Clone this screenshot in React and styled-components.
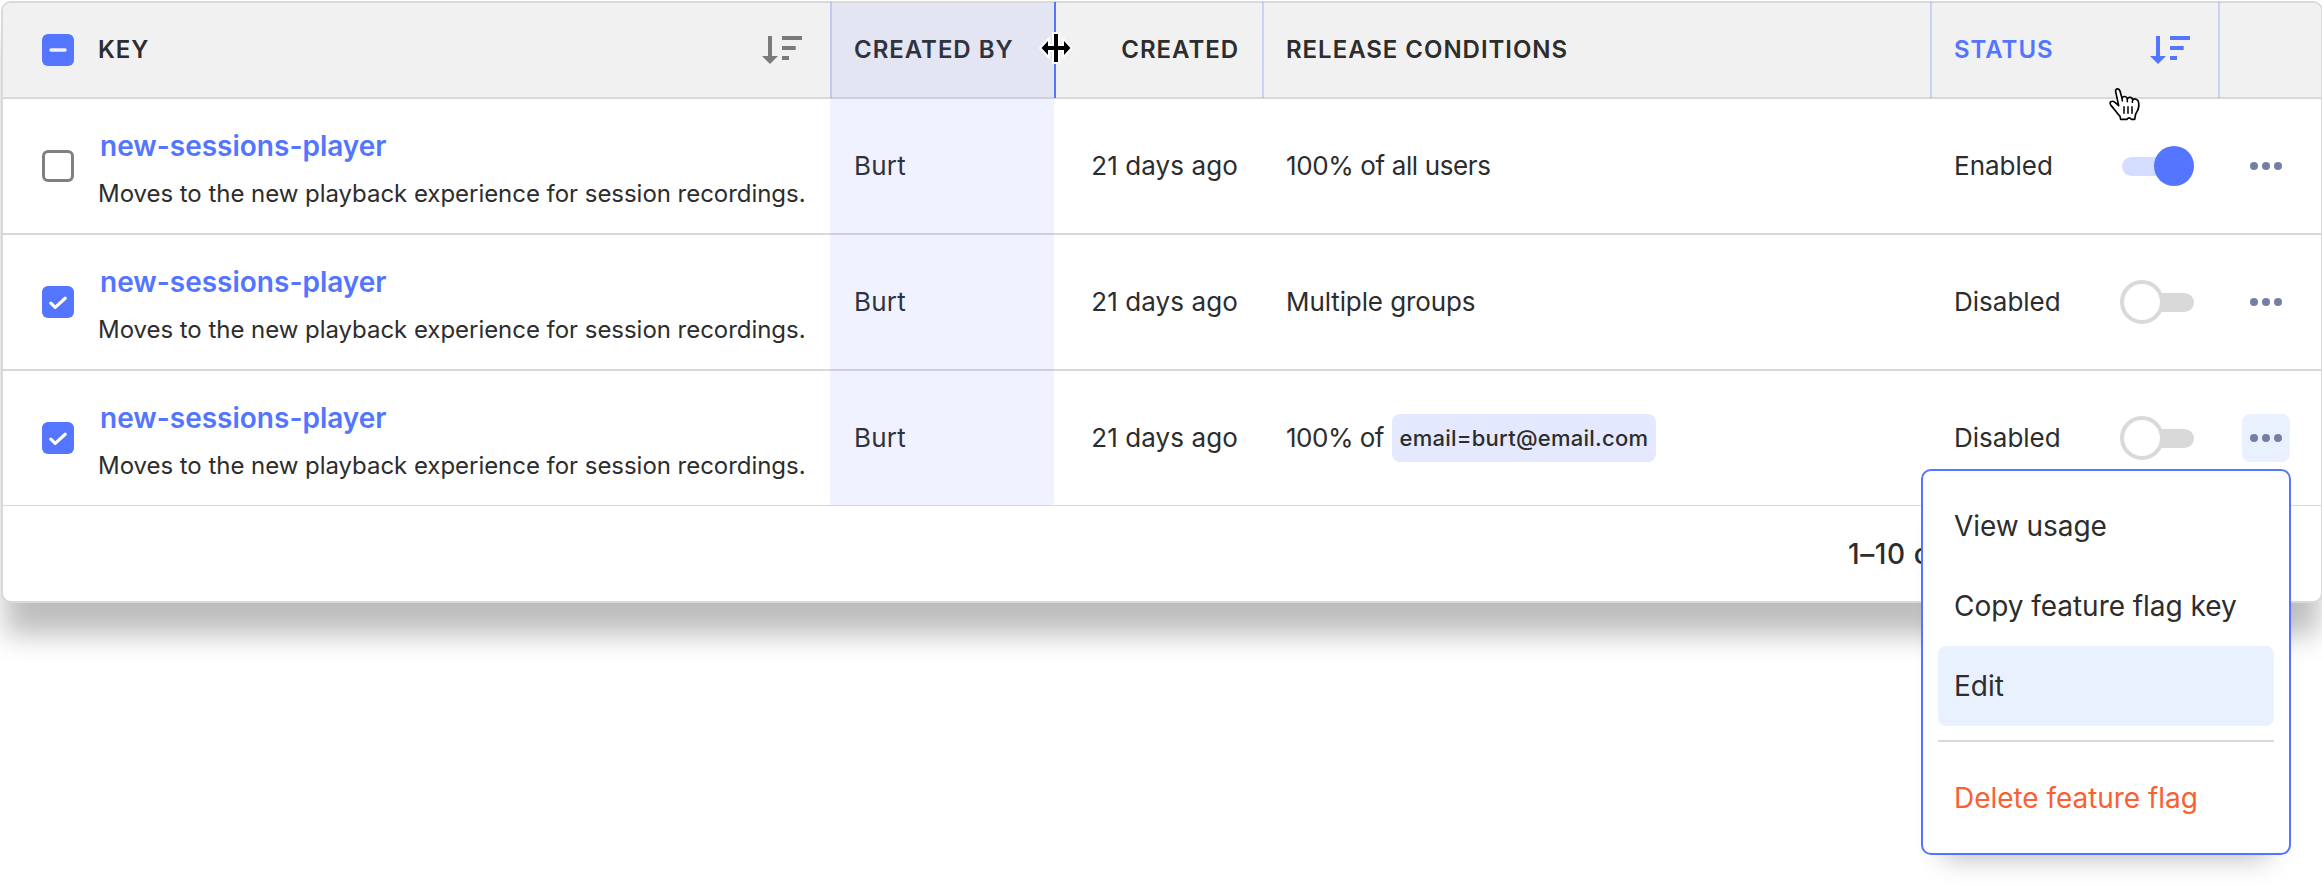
import React from "react";
import styled, { createGlobalStyle, css } from "styled-components";

const blue = "#5375ff";
const line = "#d9d9d9";
const ink = "#2d2d2d";

const GlobalStyle = createGlobalStyle`
  *, *::before, *::after { box-sizing: border-box; }
  body {
    margin: 0;
    background: #fff;
    overflow: hidden;
  }
`;

const Page = styled.main`
  width: 2322px;
  height: 886px;
  padding: 1px 0 0 1px;
  overflow: hidden;
  font-family: Inter, "Liberation Sans", sans-serif;
  color: ${ink};
`;

const Card = styled.section`
  position: relative;
  width: 2322px;
  height: 602px;
  border: 2px solid ${line};
  border-radius: 10px;
  background: #fff;
  box-shadow: 0 36px 28px -4px rgba(0, 0, 0, 0.26);
`;

const gridColumns = css`
  display: grid;
  grid-template-columns: 827px 224px 208px 668px 288px 103px;
`;

const HeaderRow = styled.div`
  ${gridColumns}
  height: 96px;
  background: #f1f1f1;
  border-bottom: 2px solid ${line};
  border-radius: 8px 8px 0 0;
`;

const HeaderCell = styled.div`
  position: relative;
  display: flex;
  align-items: center;
  justify-content: ${(p) => (p.$end ? "flex-end" : "space-between")};
  padding: 0 ${(p) => (p.$end ? 23 : 28)}px 0 ${(p) => p.$left ?? 24}px;
  font-size: 24px;
  font-weight: 600;
  letter-spacing: 0.96px;
  line-height: 28px;
  white-space: nowrap;
  color: ${(p) => (p.$active ? blue : ink)};

  ${(p) =>
    p.$divider &&
    css`
      &::before {
        content: "";
        position: absolute;
        left: 0;
        top: -1px;
        bottom: -1px;
        width: 2px;
        background: ${p.$divider === "strong" ? blue : "rgba(83, 117, 255, 0.25)"};
      }
    `}
`;

const HeaderLabel = styled.span`
  display: block;
  margin-top: -1px;
`;

const SelectAll = styled.div`
  display: flex;
  align-items: center;
  gap: 24px;
`;

const Row = styled.div`
  ${gridColumns}
  height: ${(p) => (p.$last ? 135 : 136)}px;
  border-bottom: ${(p) => (p.$last ? 1 : 2)}px solid ${line};
`;

const Cell = styled.div`
  display: flex;
  align-items: center;
  justify-content: ${(p) => p.$justify || "flex-start"};
  padding: 0 24px 0 ${(p) => p.$left ?? 24}px;
  font-size: 26px;
  line-height: 32px;
  letter-spacing: ${(p) => p.$spacing ?? 0}px;
  white-space: nowrap;
`;

const KeyStack = styled.div`
  display: flex;
  flex-direction: column;
  margin-left: 24px;
  padding-top: 7px;
`;

const KeyLink = styled.a`
  padding-left: 2px;
  font-size: 28px;
  font-weight: 600;
  line-height: 48px;
  letter-spacing: 0;
  color: ${blue};
`;

const Description = styled.span`
  font-size: 24px;
  line-height: 47px;
  letter-spacing: -0.04px;
`;

const Box = styled.span`
  display: flex;
  flex: none;
  width: 32px;
  height: 32px;
  border-radius: 6px;
  background: ${(p) => (p.$on ? blue : "#fff")};
  border: ${(p) => (p.$on ? "none" : "3px solid #808080")};
`;

const Chip = styled.span`
  display: flex;
  align-items: center;
  justify-content: center;
  width: 264px;
  height: 48px;
  margin-left: 8px;
  border-radius: 8px;
  background: #e4e9ff;
  font-size: 22px;
  font-weight: 500;
  letter-spacing: 0.25px;
`;

const Toggle = styled.span`
  position: relative;
  width: 72px;
  height: 44px;

  &::before {
    content: "";
    position: absolute;
    left: 0;
    right: 0;
    top: 12.5px;
    height: 19px;
    border-radius: 10px;
    background: ${(p) => (p.$on ? "#d4dcff" : line)};
  }

  &::after {
    content: "";
    position: absolute;
    left: ${(p) => (p.$on ? 32 : -2)}px;
    top: ${(p) => (p.$on ? 2 : 0)}px;
    width: ${(p) => (p.$on ? 40 : 44)}px;
    height: ${(p) => (p.$on ? 40 : 44)}px;
    border-radius: 50%;
    border: ${(p) => (p.$on ? "none" : `4px solid ${line}`)};
    background: ${(p) => (p.$on ? blue : "#fff")};
  }
`;

const MoreButton = styled.button`
  display: flex;
  align-items: center;
  justify-content: center;
  gap: 4px;
  width: 48px;
  height: 48px;
  padding: 0;
  border: 0;
  border-radius: 8px;
  background: ${(p) => (p.$open ? "#e9f1ff" : "transparent")};
`;

const Dot = styled.i`
  width: 8px;
  height: 8px;
  border-radius: 50%;
  background: #737fa5;
`;

const Footer = styled.div`
  display: flex;
  align-items: center;
  height: 95px;
  padding-left: 1845px;
  font-size: 28px;
  font-weight: 500;
  letter-spacing: 0.6px;
`;

const ColumnHighlight = styled.div`
  position: absolute;
  left: 827px;
  top: 0;
  width: 224px;
  height: 502px;
  background: rgba(83, 117, 255, 0.087);
`;

const ResizeCursor = styled.svg`
  position: absolute;
  left: 1035px;
  top: 29px;
`;

const HandCursor = styled.svg`
  position: absolute;
  left: 2097px;
  top: 77px;
`;

const Menu = styled.div`
  position: absolute;
  left: 1918px;
  top: 466px;
  width: 370px;
  height: 386px;
  padding: 15px;
  border: 2px solid ${blue};
  border-radius: 10px;
  background: #fff;
  box-shadow: 0 26px 24px -22px rgba(0, 0, 0, 0.25);
`;

const MenuItem = styled.div`
  display: flex;
  align-items: center;
  height: 80px;
  padding-left: 16px;
  border-radius: 8px;
  background: ${(p) => (p.$active ? "#e9f1ff" : "transparent")};
  color: ${(p) => (p.$danger ? "#f96132" : ink)};
  font-size: 28px;
  letter-spacing: -0.04px;
  white-space: nowrap;
`;

const MenuDivider = styled.div`
  height: 2px;
  margin: 14px 0 16px;
  background: ${line};
`;

function Checkbox({ state }) {
  return (
    <Box $on={state !== "off"}>
      {state !== "off" && (
        <svg width="32" height="32" viewBox="0 0 32 32" fill="none" stroke="#fff" strokeLinecap="round" strokeLinejoin="round">
          {state === "mixed" ? (
            <path d="M9 16.1H23" stroke="#f1f1f1" strokeWidth="3.5" />
          ) : (
            <path d="M8.8 17.2L13.2 21.4L23.2 12.2" strokeWidth="3.2" />
          )}
        </svg>
      )}
    </Box>
  );
}

function SortIcon({ color = "#7a7a7a" }) {
  return (
    <svg width="40" height="28" viewBox="0 0 40 28" fill={color}>
      <path d="M6 0H10V20H16L8 28L0 20H6Z" />
      <path d="M20 0H40V4H20ZM20 10H33.7V14H20ZM20 20H27V24H20Z" />
    </svg>
  );
}

const rows = [
  { check: "off", conditions: "100% of all users", spacing: -0.38, enabled: true },
  { check: "on", conditions: "Multiple groups", spacing: -0.1, enabled: false },
  { check: "on", conditions: "100% of", spacing: -0.5, chip: "email=burt@email.com", enabled: false, open: true },
];

export default function App() {
  return (
    <>
      <GlobalStyle />
      <Page>
        <Card>
          <HeaderRow>
            <HeaderCell $left={39}>
              <SelectAll>
                <Checkbox state="mixed" />
                <HeaderLabel>KEY</HeaderLabel>
              </SelectAll>
              <SortIcon />
            </HeaderCell>
            <HeaderCell $divider="soft">
              <HeaderLabel>CREATED BY</HeaderLabel>
            </HeaderCell>
            <HeaderCell $divider="strong" $end>
              <HeaderLabel>CREATED</HeaderLabel>
            </HeaderCell>
            <HeaderCell $divider="soft">
              <HeaderLabel>RELEASE CONDITIONS</HeaderLabel>
            </HeaderCell>
            <HeaderCell $divider="soft" $active>
              <HeaderLabel>STATUS</HeaderLabel>
              <SortIcon color={blue} />
            </HeaderCell>
            <HeaderCell $divider="soft" />
          </HeaderRow>

          {rows.map((row, i) => (
            <Row key={i} $last={i === rows.length - 1}>
              <Cell $left={39}>
                <Checkbox state={row.check} />
                <KeyStack>
                  <KeyLink>new-sessions-player</KeyLink>
                  <Description>Moves to the new playback experience for session recordings.</Description>
                </KeyStack>
              </Cell>
              <Cell $spacing={0.2}>Burt</Cell>
              <Cell $justify="flex-end" $spacing={0.1}>21 days ago</Cell>
              <Cell $spacing={row.spacing}>
                {row.conditions}
                {row.chip && <Chip>{row.chip}</Chip>}
              </Cell>
              <Cell $justify="space-between">
                {row.enabled ? "Enabled" : "Disabled"}
                <Toggle $on={row.enabled} />
              </Cell>
              <Cell>
                <MoreButton $open={row.open} aria-label="More actions">
                  <Dot />
                  <Dot />
                  <Dot />
                </MoreButton>
              </Cell>
            </Row>
          ))}

          <Footer>1–10 of</Footer>

          <ColumnHighlight />

          <ResizeCursor width="36" height="32" viewBox="0 0 36 32">
            <path
              d="M16 2H20V14H26V9L32.5 16L26 23V18H20V30H16V18H10V23L3.5 16L10 9V14H16Z"
              fill="#000"
              stroke="#fff"
              strokeWidth="4"
              paintOrder="stroke"
            />
          </ResizeCursor>

          <HandCursor width="50" height="50" viewBox="0 0 150 150" fill="none" stroke="#000" strokeWidth="5" strokeLinejoin="round" strokeLinecap="round">
            <path
              d="M47 35C45 25 57 23 60 33L66 55C70 47 80 48 82 57C86 49 97 51 98 60C103 54 115 57 116 68C118 80 114 92 107 102L104 118H94Q87 109 81 118H62L60 109C51 100 42 86 33 76C25 66 36 60 45 67L56 77Z"
              fill="#fff"
            />
            <path d="M66 55L67 63M82 57V65M98 60L97 67" strokeWidth="4.5" />
            <path d="M72 80V100M84 80V100M96 80V100" strokeWidth="4.5" />
          </HandCursor>

          <Menu>
            <MenuItem>View usage</MenuItem>
            <MenuItem>Copy feature flag key</MenuItem>
            <MenuItem $active>Edit</MenuItem>
            <MenuDivider />
            <MenuItem $danger>Delete feature flag</MenuItem>
          </Menu>
        </Card>
      </Page>
    </>
  );
}
